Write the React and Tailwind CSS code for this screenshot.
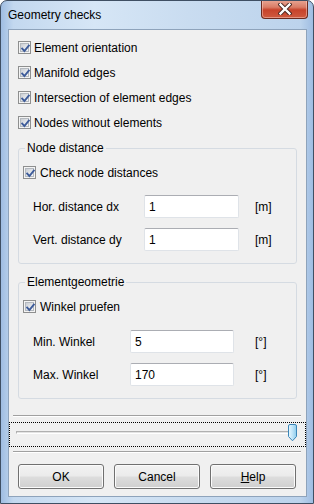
import React from "react";

function Check() {
  return (
    <span className="w-[13px] h-[13px] shrink-0 border border-[#8e8f8f] bg-[#f4f4f4] flex items-center justify-center">
      <span className="w-[9px] h-[9px] border border-[#b4b9bf] bg-[linear-gradient(135deg,#c9cdd3_0%,#e6e8eb_60%,#f6f6f6_100%)] relative flex items-center justify-center">
        <svg width="11" height="11" viewBox="0 0 11 11" className="absolute -left-[1px] -top-[1px]">
          <path d="M2.2 5.6 L4.4 8 L8.8 2.6" fill="none" stroke="#3e5c9a" strokeWidth="1.9" strokeLinecap="square" />
        </svg>
      </span>
    </span>
  );
}

function TopCheck({ label }) {
  return (
    <div className="h-[25px] flex items-center pl-[9px] gap-[3px]">
      <Check />
      <span>{label}</span>
    </div>
  );
}

function Field({ value, width }) {
  return (
    <input
      readOnly
      value={value}
      className={`${width} h-[23px] bg-white border border-[#dfe3e8] border-t-[#abadb3] rounded-[2px] pl-[4px] text-[12px] text-black outline-none`}
      style={{ fontFamily: "'Liberation Sans', Arial, sans-serif" }}
    />
  );
}

function Btn({ children }) {
  return (
    <button className="w-[86px] h-[25px] rounded-[3px] border border-[#707070] bg-[linear-gradient(#f2f2f2_0%,#ebebeb_48%,#dddddd_52%,#cfcfcf_100%)] shadow-[inset_0_0_0_1px_#fbfbfb] text-[12px] text-black flex items-center justify-center">
      {children}
    </button>
  );
}

export default function App() {
  return (
    <div
      className="w-[314px] h-[504px] rounded-t-[7px] border border-[#3f4f63] bg-[linear-gradient(90deg,#9fbde2_0%,#c3d8ef_4%,#d6e6f6_30%,#c9dcf0_60%,#bcd3ec_96%,#9fbde2_100%)] flex flex-col text-[12px] text-black overflow-hidden"
      style={{ fontFamily: "'Liberation Sans', Arial, sans-serif" }}
    >
      {/* title bar */}
      <div className="h-[28px] flex items-start justify-between">
        <span className="pl-[7px] pt-[7px] leading-[14px] text-black">Geometry checks</span>
        <div className="mr-[5px] -mt-[1px] w-[47px] h-[19px] rounded-b-[4px] border border-[#6b2a1f] border-t-0 bg-[linear-gradient(#e9a795_0%,#d97c66_40%,#c7432b_55%,#cf5a3f_100%)] shadow-[inset_0_0_0_1px_rgba(255,220,210,0.45)] flex items-center justify-center">
          <svg width="14" height="12" viewBox="0 0 14 12">
            <path d="M2.5 1.5 L11.5 10.5 M11.5 1.5 L2.5 10.5" stroke="#4a2620" strokeWidth="4.2" strokeLinecap="square" />
            <path d="M2.5 1.5 L11.5 10.5 M11.5 1.5 L2.5 10.5" stroke="#ffffff" strokeWidth="2.4" strokeLinecap="square" />
          </svg>
        </div>
      </div>

      {/* client area */}
      <div className="ml-[7px] mr-[6px] h-[468px] border border-[#8ea3bb] bg-[#f0f0f0] flex flex-col">
        <div className="pt-[5px]">
          <TopCheck label="Element orientation" />
          <TopCheck label="Manifold edges" />
          <TopCheck label="Intersection of element edges" />
          <TopCheck label="Nodes without elements" />
        </div>

        <fieldset className="mx-[9px] mt-[5px] border border-[#d5dbe2] rounded-[3px] pb-[12px]">
          <legend className="ml-[6px] px-[2px] leading-[16px]">Node distance</legend>
          <div className="h-[25px] mt-[4px] flex items-center pl-[4px] gap-[4px]">
            <Check />
            <span>Check node distances</span>
          </div>
          <div className="mt-[10px] flex flex-col gap-[10px]">
            <div className="flex items-center pl-[14px]">
              <span className="w-[111px]">Hor. distance dx</span>
              <Field value="1" width="w-[95px]" />
              <span className="ml-[16px]">[m]</span>
            </div>
            <div className="flex items-center pl-[14px]">
              <span className="w-[111px]">Vert. distance dy</span>
              <Field value="1" width="w-[95px]" />
              <span className="ml-[16px]">[m]</span>
            </div>
          </div>
        </fieldset>

        <fieldset className="mx-[9px] mt-[10px] border border-[#d5dbe2] rounded-[3px] pb-[12px]">
          <legend className="ml-[6px] px-[2px] leading-[16px]">Elementgeometrie</legend>
          <div className="h-[25px] mt-[4px] flex items-center pl-[4px] gap-[4px]">
            <Check />
            <span>Winkel pruefen</span>
          </div>
          <div className="mt-[11px] flex flex-col gap-[10px]">
            <div className="flex items-center pl-[14px]">
              <span className="w-[97px]">Min. Winkel</span>
              <Field value="5" width="w-[104px]" />
              <span className="ml-[21px]">[°]</span>
            </div>
            <div className="flex items-center pl-[14px]">
              <span className="w-[97px]">Max. Winkel</span>
              <Field value="170" width="w-[104px]" />
              <span className="ml-[21px]">[°]</span>
            </div>
          </div>
        </fieldset>

        <div className="mt-[16px] ml-[4px] mr-[5px] h-[1px] bg-[#a0a0a0] border-b border-b-white box-content" />

        <div className="mt-[5px] h-[25px] border border-dotted border-black flex items-start">
          <div className="flex-1 ml-[6px] mt-[8px] h-[3px] border-t border-t-[#b0b0b0] border-l border-l-[#b0b0b0] bg-[#e3e3e3] border-b border-b-white" />
          <svg width="11" height="18" viewBox="0 0 11 18" className="-ml-[4px] mr-[7px] mt-[1px] shrink-0">
            <defs>
              <linearGradient id="th" x1="0" y1="0" x2="1" y2="0">
                <stop offset="0" stopColor="#e9f7fe" />
                <stop offset="0.5" stopColor="#bfe4f8" />
                <stop offset="1" stopColor="#8ccbec" />
              </linearGradient>
            </defs>
            <path d="M1.5 2 Q1.5 0.5 3 0.5 H8 Q9.5 0.5 9.5 2 V12.5 L5.5 16.8 L1.5 12.5 Z" fill="url(#th)" stroke="#3c86b8" strokeWidth="1" />
          </svg>
        </div>

        <div className="mt-[4px] ml-[4px] mr-[5px] h-[1px] bg-[#a0a0a0] border-b border-b-white box-content" />

        <div className="mt-[11px] pl-[9px] flex gap-[10px]">
          <Btn>OK</Btn>
          <Btn>Cancel</Btn>
          <Btn>
            <span><span className="underline">H</span>elp</span>
          </Btn>
        </div>
      </div>
    </div>
  );
}
